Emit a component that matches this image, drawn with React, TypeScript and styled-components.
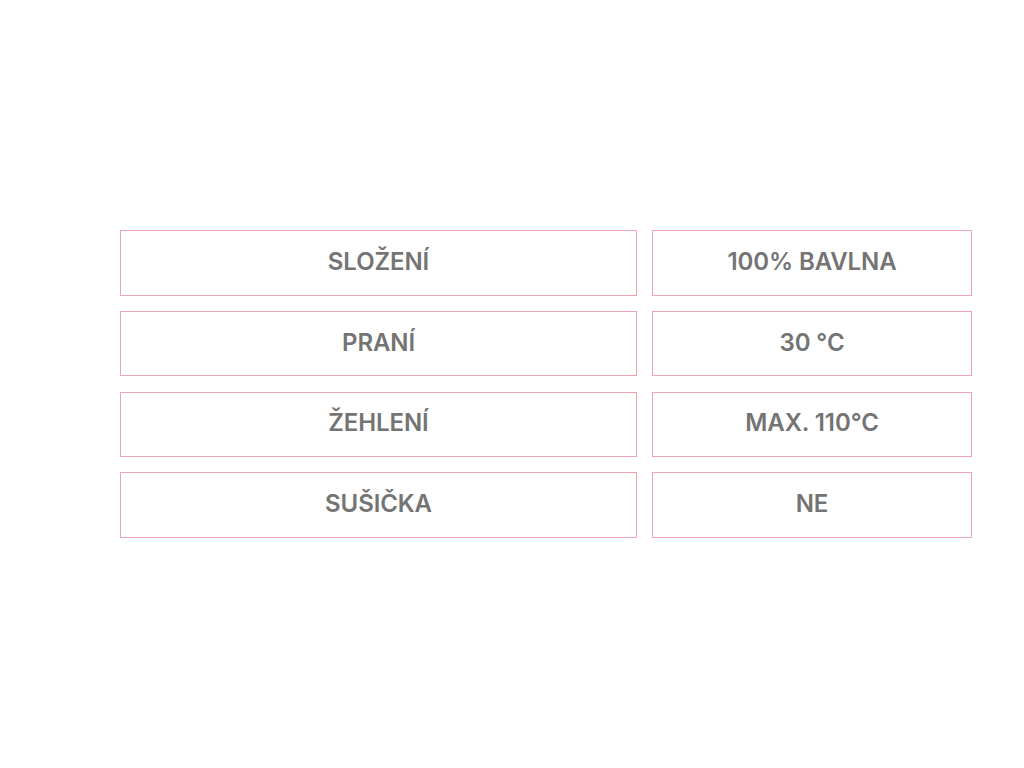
import React from "react";
import styled, { createGlobalStyle } from "styled-components";

const Global = createGlobalStyle`
  html, body { margin: 0; padding: 0; background: #ffffff; }
  body { font-family: Inter, "Noto Sans", sans-serif; }
`;

const Page = styled.div`
  padding: 230px 0 0 120px;
`;

const Table = styled.div`
  display: grid;
  grid-template-columns: 517px 320px;
  grid-auto-rows: 65.6px;
  column-gap: 15px;
  row-gap: 15.2px;
  width: 852px;
`;

const Cell = styled.div`
  box-sizing: border-box;
  border: 1px solid #f0a3b1;
  display: flex;
  align-items: center;
  justify-content: center;
  padding-bottom: 2px;
  font-family: Inter, "Noto Sans", sans-serif;
  font-weight: 600;
  font-size: 24px;
  line-height: 1;
  color: #747474;
  text-transform: uppercase;
  letter-spacing: -0.1px;
`;

const rows: [string, string][] = [
  ["SLOŽENÍ", "100% BAVLNA"],
  ["PRANÍ", "30 °C"],
  ["ŽEHLENÍ", "MAX. 110°C"],
  ["SUŠIČKA", "NE"],
];

export default function App() {
  return (
    <>
      <Global />
      <Page>
        <Table>
          {rows.map(([k, v]) => (
            <React.Fragment key={k}>
              <Cell>{k}</Cell>
              <Cell>{v}</Cell>
            </React.Fragment>
          ))}
        </Table>
      </Page>
    </>
  );
}
